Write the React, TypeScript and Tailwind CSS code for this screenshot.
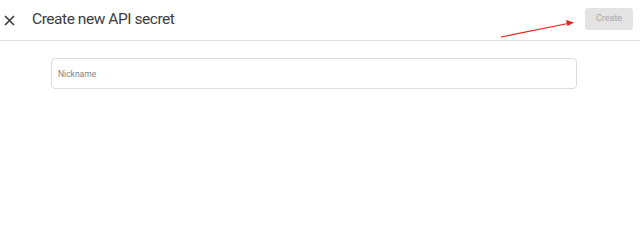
import React from "react";

const App = () => {
    return (
        <div className="relative w-[640px] h-[226px] bg-white" style={{ fontFamily: 'Roboto, "Noto Sans", sans-serif' }}>
            <div className="flex items-center h-[41px] border-b border-[#dedede] pl-[3px] pr-[7px]">
                <button className="w-[12px] h-[12px] flex items-center justify-center">
                    <svg width="11" height="11" viewBox="0 0 11 11">
                        <path d="M1 1 L10 10 M10 1 L1 10" stroke="#3a3a3a" strokeWidth="1.6" />
                    </svg>
                </button>
                <h1 className="ml-[17px] text-[15.5px] tracking-[-0.45px] text-[#3c3c3c] leading-none">Create new API secret</h1>
                <div className="flex-1" />
                <button className="w-[48px] h-[22px] rounded-[3px] bg-[#e3e3e3] text-[#a8a8a8] text-[9px] mb-[2px]">Create</button>
            </div>
            <div className="pl-[51px] pt-[17px]">
                <input
                    className="w-[526px] h-[31px] border border-[#dcdcdc] rounded-[4px] px-[6px] text-[8.5px] placeholder:text-[#7a7f88] outline-none"
                    placeholder="Nickname"
                />
            </div>
            <svg className="absolute left-0 top-0" width="640" height="226" viewBox="0 0 640 226">
                <line x1="501" y1="37" x2="568" y2="23.5" stroke="#e8201c" strokeWidth="1.2" />
                <polygon points="574,22.5 566,20 567.5,26" fill="#e8201c" />
            </svg>
        </div>
    );
};

export default App;
